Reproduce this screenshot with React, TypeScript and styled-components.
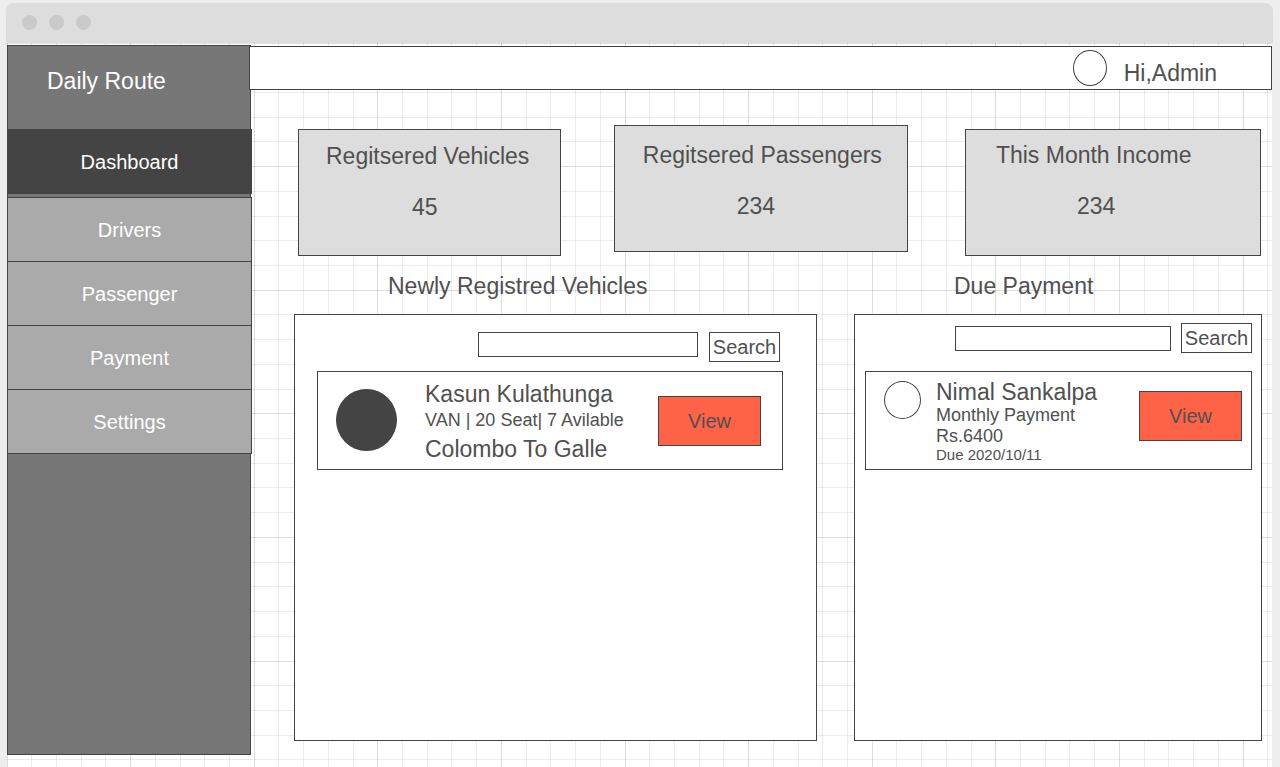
import React from "react";
import styled, { createGlobalStyle, css } from "styled-components";

const ink = "#444444";
const GRID_TILE = 618;
const GRID_CELLS = 25;

/* One tile of ruled paper: 25 thin lines, every fifth one darker. */
const ruledLines = (direction: string) => {
  const stops: string[] = [];
  for (let i = 0; i < GRID_CELLS; i += 1) {
    const at = Math.floor((i * GRID_TILE) / GRID_CELLS);
    const color = i % 5 === 0 ? "rgba(0, 0, 0, 0.13)" : "rgba(0, 0, 0, 0.075)";
    stops.push(
      `transparent ${at}px`,
      `${color} ${at}px`,
      `${color} ${at + 1}px`,
      `transparent ${at + 1}px`
    );
  }
  return `linear-gradient(${direction}, ${stops.join(", ")})`;
};

const GlobalStyle = createGlobalStyle`
  *, *::before, *::after { box-sizing: border-box; }
  body {
    margin: 0;
    background: #eeeeee;
    color: #505050;
    font-family: "Liberation Sans", Arial, sans-serif;
    font-size: 23px;
    line-height: 26px;
  }
  h1, h2, h3, p, ul { margin: 0; padding: 0; font-size: inherit; font-weight: 400; }
  ul { list-style: none; }
  button, input { font: inherit; color: inherit; }
`;

const Frame = styled.div`
  display: flex;
  flex-direction: column;
  min-height: 100vh;
  padding: 3px 7px 0 6px;
`;

const TitleBar = styled.div`
  display: flex;
  align-items: center;
  gap: 12px;
  height: 40px;
  padding: 0 16px 2px;
  border-radius: 8px 8px 0 0;
  background: #dddddd;
`;

const WindowDot = styled.span`
  width: 15px;
  height: 15px;
  border-radius: 50%;
  background: #cacaca;
`;

const Canvas = styled.div`
  display: flex;
  flex: 1;
  align-items: flex-start;
  margin: 0 1px;
  padding-top: 2px;
  background-color: #ffffff;
  background-image: ${ruledLines("to right")}, ${ruledLines("to bottom")};
  background-size: ${GRID_TILE}px ${GRID_TILE}px;
`;

const Workspace = styled.div`
  display: flex;
  flex: 1;
  min-width: 0;
`;

const Sidebar = styled.aside`
  flex: 0 0 244px;
  border: 1px solid ${ink};
  background: #777777;
  color: #ffffff;
`;

const Brand = styled.h1`
  padding: 22px 39px 35px;
`;

const Menu = styled.ul`
  margin: 0 -2px 0 -1px;
`;

const MenuLink = styled.a<{ $active?: boolean }>`
  display: flex;
  align-items: center;
  justify-content: center;
  height: 65px;
  border: 1px solid ${ink};
  background: #aaaaaa;
  color: #ffffff;
  font-size: 20px;
  text-decoration: none;

  li + li & {
    margin-top: -1px;
  }

  ${({ $active }) =>
    $active &&
    css`
      margin-bottom: 4px;
      background: ${ink};
    `}
`;

const Main = styled.main`
  flex: 1;
  min-width: 0;
  padding: 1px 0 14px;
`;

const TopBar = styled.header`
  position: relative;
  display: flex;
  align-items: center;
  justify-content: flex-end;
  gap: 17px;
  height: 44px;
  margin-left: -2px;
  padding-right: 54px;
  border: 1px solid ${ink};
  background: #ffffff;
`;

const UserAvatar = styled.span`
  width: 34px;
  height: 36px;
  border: 1px solid ${ink};
  border-radius: 50%;
`;

const Greeting = styled.span`
  padding-top: 10px;
`;

const Stats = styled.section`
  display: flex;
  height: 131px;
  margin: 35px 11px 0 47px;
`;

const StatCard = styled.article<{
  $grow: number;
  $gap: number;
  $align: "start" | "end";
  $top: number;
  $inset: number;
}>`
  flex: ${({ $grow }) => $grow} 1 0;
  align-self: flex-${({ $align }) => $align};
  height: 127px;
  margin-right: ${({ $gap }) => $gap}px;
  padding: ${({ $top, $inset }) => `${$top}px 0 0 ${$inset}px`};
  border: 1px solid ${ink};
  background: #dddddd;
  white-space: nowrap;
`;

const StatValue = styled.p<{ $indent: number }>`
  margin-top: 25px;
  padding-left: ${({ $indent }) => $indent}px;
`;

const Sections = styled.div`
  display: flex;
  gap: 37px;
  margin: 17px 10px 0 43px;
`;

const Section = styled.section<{ $grow: number }>`
  flex: ${({ $grow }) => $grow} 1 0;
  min-width: 0;
`;

const SectionTitle = styled.h2<{ $indent: number }>`
  padding-left: ${({ $indent }) => $indent}px;
`;

const Panel = styled.div<{ $left: number; $right: number }>`
  min-height: 427px;
  margin-top: 15px;
  padding: 0 ${({ $right }) => $right}px 0 ${({ $left }) => $left}px;
  border: 1px solid ${ink};
  background: #ffffff;
`;

const SearchForm = styled.form<{ $centered?: boolean }>`
  display: flex;
  justify-content: flex-end;
  align-items: ${({ $centered }) => ($centered ? "center" : "flex-start")};
  gap: ${({ $centered }) => ($centered ? 10 : 11)}px;
  padding: ${({ $centered }) => ($centered ? "8px 0 18px" : "17px 3px 9px 0")};
`;

const SearchInput = styled.input<{ $width: number }>`
  width: ${({ $width }) => $width}px;
  min-width: 0;
  height: 25px;
  padding: 0 6px;
  border: 1px solid ${ink};
  border-radius: 0;
  background: #ffffff;
  font-size: 18px;
  outline: none;
`;

const SearchButton = styled.button`
  flex: 0 0 71px;
  height: 30px;
  padding: 0;
  border: 1px solid ${ink};
  background: #ffffff;
  font-size: 20px;
  line-height: 26px;
`;

const Item = styled.article<{ $end: number }>`
  display: flex;
  align-items: flex-start;
  height: 99px;
  padding: 0 ${({ $end }) => $end}px 0 18px;
  border: 1px solid ${ink};
  white-space: nowrap;
`;

const Photo = styled.span<{ $filled?: boolean }>`
  flex: none;
  width: ${({ $filled }) => ($filled ? 61 : 37)}px;
  height: ${({ $filled }) => ($filled ? 62 : 38)}px;
  margin-top: ${({ $filled }) => ($filled ? 17 : 9)}px;
  border: 1px solid ${ink};
  border-radius: 50%;
  background: ${({ $filled }) => ($filled ? ink : "#ffffff")};
`;

const Details = styled.div<{ $gap: number; $top: number }>`
  flex: 1;
  min-width: 0;
  padding: ${({ $top, $gap }) => `${$top}px 0 0 ${$gap}px`};
`;

const Line = styled.p<{ $size?: number; $height?: number }>`
  font-size: ${({ $size = 23 }) => $size}px;
  line-height: ${({ $height = 26 }) => $height}px;
`;

const ViewButton = styled.button<{ $top: number }>`
  flex: 0 0 103px;
  height: 50px;
  margin-top: ${({ $top }) => $top}px;
  padding: 0;
  border: 1px solid ${ink};
  background: #ff6347;
  font-size: 20px;
`;

const menu = ["Dashboard", "Drivers", "Passenger", "Payment", "Settings"];

const stats = [
  { title: "Regitsered Vehicles", value: 45, grow: 262, gap: 53, align: "end", top: 13, inset: 27, indent: 86 },
  { title: "Regitsered Passengers", value: 234, grow: 296, gap: 57, align: "start", top: 16, inset: 28, indent: 94 },
  { title: "This Month Income", value: 234, grow: 296, gap: 0, align: "end", top: 12, inset: 30, indent: 81 },
] as const;

const stay = (event: React.FormEvent) => event.preventDefault();

export default function App() {
  return (
    <>
      <GlobalStyle />
      <Frame>
        <TitleBar>
          <WindowDot />
          <WindowDot />
          <WindowDot />
        </TitleBar>
        <Canvas>
          <Workspace>
            <Sidebar>
              <Brand>Daily Route</Brand>
              <nav>
                <Menu>
                  {menu.map((name, index) => (
                    <li key={name}>
                      <MenuLink
                        href={`#${name.toLowerCase()}`}
                        $active={index === 0}
                        aria-current={index === 0 ? "page" : undefined}
                      >
                        {name}
                      </MenuLink>
                    </li>
                  ))}
                </Menu>
              </nav>
            </Sidebar>
            <Main>
              <TopBar>
                <UserAvatar />
                <Greeting>Hi,Admin</Greeting>
              </TopBar>
              <Stats>
                {stats.map((stat) => (
                  <StatCard
                    key={stat.title}
                    $grow={stat.grow}
                    $gap={stat.gap}
                    $align={stat.align}
                    $top={stat.top}
                    $inset={stat.inset}
                  >
                    <h2>{stat.title}</h2>
                    <StatValue $indent={stat.indent}>{stat.value}</StatValue>
                  </StatCard>
                ))}
              </Stats>
              <Sections>
                <Section $grow={523}>
                  <SectionTitle $indent={94}>Newly Registred Vehicles</SectionTitle>
                  <Panel $left={22} $right={33}>
                    <SearchForm onSubmit={stay}>
                      <SearchInput type="text" $width={220} aria-label="Search vehicles" />
                      <SearchButton type="submit">Search</SearchButton>
                    </SearchForm>
                    <Item $end={21}>
                      <Photo $filled />
                      <Details $gap={28} $top={9}>
                        <h3>Kasun Kulathunga</h3>
                        <Line $size={18}>VAN | 20 Seat| 7 Avilable</Line>
                        <Line $height={32}>Colombo To Galle</Line>
                      </Details>
                      <ViewButton type="button" $top={24}>View</ViewButton>
                    </Item>
                  </Panel>
                </Section>
                <Section $grow={408}>
                  <SectionTitle $indent={100}>Due Payment</SectionTitle>
                  <Panel $left={10} $right={9}>
                    <SearchForm $centered onSubmit={stay}>
                      <SearchInput type="text" $width={216} aria-label="Search payments" />
                      <SearchButton type="submit">Search</SearchButton>
                    </SearchForm>
                    <Item $end={9}>
                      <Photo />
                      <Details $gap={15} $top={7}>
                        <h3>Nimal Sankalpa</h3>
                        <Line $size={18} $height={20}>Monthly Payment</Line>
                        <Line $size={18} $height={22}>Rs.6400</Line>
                        <Line $size={15} $height={16}>Due 2020/10/11</Line>
                      </Details>
                      <ViewButton type="button" $top={19}>View</ViewButton>
                    </Item>
                  </Panel>
                </Section>
              </Sections>
            </Main>
          </Workspace>
        </Canvas>
      </Frame>
    </>
  );
}
